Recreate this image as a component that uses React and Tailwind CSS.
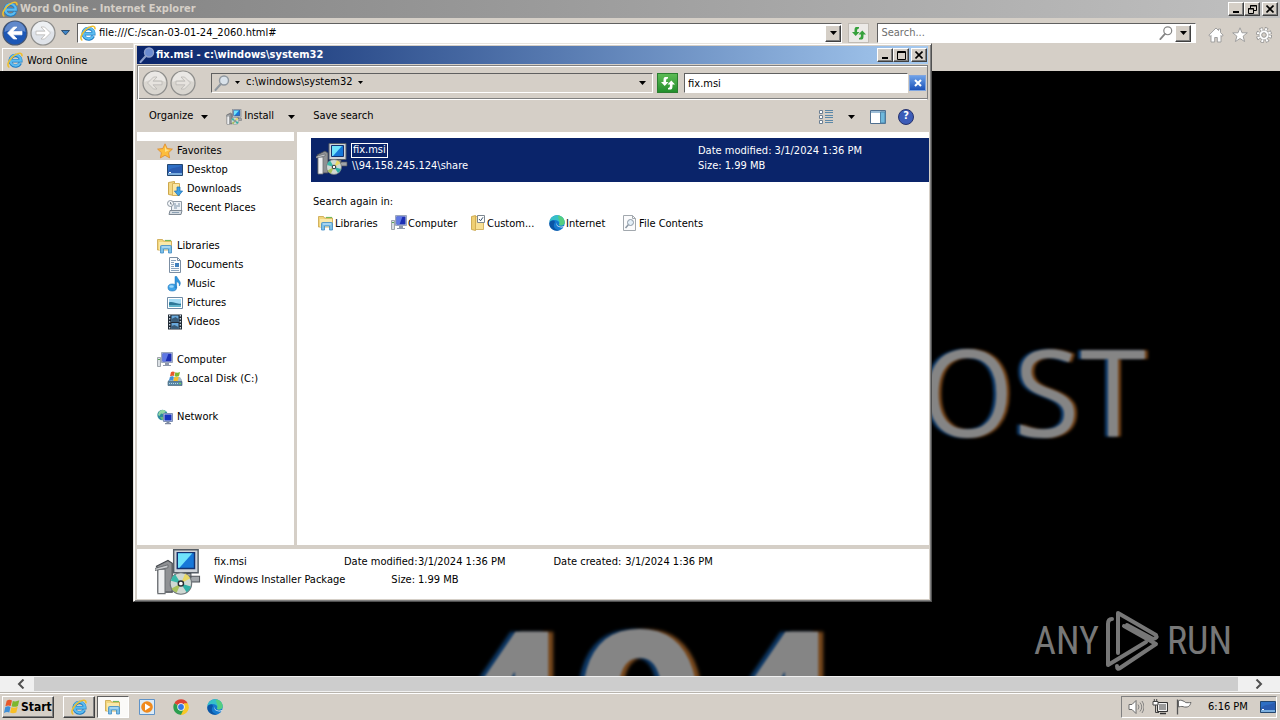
import { useState } from 'react'

const RAISED = 'bg-[#d5cfc7] border border-t-white border-l-white border-r-[#404040] border-b-[#404040] shadow-[inset_-1px_-1px_0_#808080]'
const SUNKEN = 'border border-t-[#606060] border-l-[#606060] border-r-white border-b-white'

const FAVORITES = [
  { label: 'Desktop', Icon: DesktopIcon },
  { label: 'Downloads', Icon: DownloadsIcon },
  { label: 'Recent Places', Icon: RecentIcon },
]

const LIBRARIES = [
  { label: 'Documents', Icon: DocumentIcon },
  { label: 'Music', Icon: MusicIcon },
  { label: 'Pictures', Icon: PictureIcon },
  { label: 'Videos', Icon: VideoIcon },
]

const TREE = [
  { label: 'Favorites', Icon: StarIcon, items: FAVORITES },
  { label: 'Libraries', Icon: LibrariesIcon, items: LIBRARIES },
  { label: 'Computer', Icon: ComputerIcon, items: [{ label: 'Local Disk (C:)', Icon: DiskIcon }] },
  { label: 'Network', Icon: NetworkIcon, items: [] },
]

const SEARCH_AGAIN = [
  { label: 'Libraries', Icon: LibrariesIcon, width: 'w-[73px]' },
  { label: 'Computer', Icon: ComputerIcon, width: 'w-[79px]' },
  { label: 'Custom...', Icon: CustomIcon, width: 'w-[79px]' },
  { label: 'Internet', Icon: EdgeIcon, width: 'w-[73px]' },
  { label: 'File Contents', Icon: FileSearchIcon, width: 'w-[100px]' },
]

function Svg({ size = 16, box = 16, children }) {
  return (
    <svg width={size} height={size} viewBox={`0 0 ${box} ${box}`} fill="none" className="shrink-0" aria-hidden="true">
      {children}
    </svg>
  )
}

function Caret() {
  return (
    <svg width="7" height="4" viewBox="0 0 7 4" className="shrink-0" aria-hidden="true">
      <path d="M0 0h7L3.500 4z" fill="#000" />
    </svg>
  )
}

function SmallCaret() {
  return (
    <svg width="5" height="3" viewBox="0 0 5 3" className="shrink-0" aria-hidden="true">
      <path d="M0 0h5L2.500 3z" fill="#000" />
    </svg>
  )
}

function IeIcon() {
  return (
    <Svg>
      <path d="M13.300 11A5.300 5.300 0 1 1 13.800 8.700H4.500" stroke="#1f7cc4" strokeWidth="3.400" />
      <path d="M13.100 11A5.300 5.300 0 1 1 13.800 8.700H4.500" stroke="#5cbcf0" strokeWidth="2.200" />
      <path d="M1.800 15C-.8 12.500 3 6 8.500 2.600 12 .5 15.300.6 15 3.800" stroke="#eebf2f" strokeWidth="1.600" strokeLinecap="round" />
    </Svg>
  )
}

function StarIcon() {
  return (
    <Svg>
      <path d="M8 .8l2.200 4.700 5.200.6-3.800 3.600 1 5.200L8 12.300l-4.600 2.600 1-5.200L.6 6.100l5.200-.6z" fill="#fcbd3c" stroke="#e0892a" strokeWidth=".8" />
      <path d="M8 3l1.500 3.500 3 .4L8 9z" fill="#fee08a" />
    </Svg>
  )
}

function DesktopIcon() {
  return (
    <Svg>
      <path d="M.5 2.500h15v11H.5z" fill="#2f6fc4" stroke="#23466f" />
      <path d="M1 9c5-5 9-2 14-6v8H1z" fill="#2a5cb0" />
      <path d="M1 11h14v2H1z" fill="#7baede" />
      <path d="M2 10h2v1H2z" fill="#fff" />
    </Svg>
  )
}

function DownloadsIcon() {
  return (
    <Svg>
      <path d="M1.500 1.500l6-1v14l-6-1z" fill="#f3d885" stroke="#cda74b" />
      <path d="M5.500 2.500h7v12h-7z" fill="#fbe7a4" stroke="#d6b25b" />
      <path d="M10 6h3v4h2.600L11.500 15 7.400 10H10z" fill="#3fa1e4" stroke="#1b6db4" strokeWidth=".7" />
    </Svg>
  )
}

function RecentIcon() {
  return (
    <Svg>
      <path d="M4.500 1.500h10v9h-10z" fill="#eef2f6" stroke="#8f9aa5" />
      <path d="M6 4h3m2 0h2M7 6h6M7 8h3" stroke="#7d93a8" />
      <path d="M3 10.500h12l-1 4H2z" fill="#d6dce2" stroke="#7e8994" />
      <path d="M5 12.500h7" stroke="#8ba0b3" />
      <circle cx="3.500" cy="3.500" r="3" fill="#f4f7fa" stroke="#8c97a1" />
      <path d="M3.500 2v2H5" stroke="#55626e" strokeWidth=".7" />
    </Svg>
  )
}

function LibrariesIcon() {
  return (
    <Svg>
      <path d="M.5 1.500h5l1 1.500h8v9H.5z" fill="#f2d67c" stroke="#c9a348" strokeWidth=".8" />
      <path d="M2 4h12v8H2z" fill="#fae9a9" />
      <path d="M8 2.500h6" stroke="#76b85a" strokeWidth="1.200" />
      <path d="M3.500 15V8.500q0-1 1-1h9q1 0 1 1V15h-3v-4h-5v4z" fill="#7cc0e8" stroke="#3f8cc4" strokeWidth=".8" />
      <path d="M5 9h8" stroke="#cdeafa" />
    </Svg>
  )
}

function DocumentIcon() {
  return (
    <Svg>
      <path d="M2.500.5h8l3 3v12h-11z" fill="#fafcfe" stroke="#7b8ea3" />
      <path d="M10.500.5v3h3" stroke="#7b8ea3" />
      <path d="M4 3.500h5M4 5.500h3M4 7.500h3M4 9.500h3M4 11.500h8M4 13.500h8" stroke="#8aa4be" />
      <path d="M8 6h4v4H8z" fill="#3f7fbd" />
    </Svg>
  )
}

function MusicIcon() {
  return (
    <Svg>
      <ellipse cx="5.300" cy="11.500" rx="4.300" ry="3.500" fill="#3fa3e8" stroke="#1f76bd" strokeWidth=".6" />
      <path d="M8 .5v11.500h1.600V5.500c2 1 3 2 2.700 4.500 3-4-1-5.500-2.500-9.500z" fill="#2f95dd" stroke="#1f76bd" strokeWidth=".5" />
      <ellipse cx="4.500" cy="10.500" rx="2.300" ry="1.200" fill="#9bd7fa" />
    </Svg>
  )
}

function PictureIcon() {
  return (
    <Svg>
      <path d="M.5 2.500h15v11H.5z" fill="#fff" stroke="#6f8ba6" />
      <path d="M2 4h12v8H2z" fill="#a6dcf5" />
      <path d="M2 7.500c4-1.500 7 2 12 1V12H2z" fill="#2f7898" />
      <path d="M2 10h12v2H2z" fill="#62b5cc" />
    </Svg>
  )
}

function VideoIcon() {
  return (
    <Svg>
      <path d="M1 .5h14v15H1z" fill="#202a35" />
      <path d="M4.500 1.500h7V8h-7zM4.500 9h7v6h-7z" fill="#69a9dc" />
      <path d="M4.500 5l4-2 3 2v3h-7zM4.500 12l3-1 4 2v2h-7z" fill="#3a5c78" />
      <path d="M2.700 1v14M13.300 1v14" stroke="#dce7f0" strokeWidth="1.200" strokeDasharray="1.500 1.500" />
    </Svg>
  )
}

function ComputerIcon() {
  return (
    <Svg>
      <path d="M.5 5.500h3v9h-3z" fill="#dadfe4" stroke="#8a929a" strokeWidth=".8" />
      <path d="M1 7.500h2" stroke="#58a454" />
      <path d="M4.500.500h11v10h-11z" fill="#c9d2e2" stroke="#9aa6bd" />
      <path d="M5.500 1.500h9v8h-9z" fill="#1c2fb4" />
      <path d="M5.500 1.500h6l-3 8h-3z" fill="#5f78e4" />
      <path d="M8 11h4v2H8zM6 13h8v1H6z" fill="#8f99ac" />
    </Svg>
  )
}

function WinFlag() {
  return (
    <>
      <path d="M2.700 1.700c2-1.500 3.700-1 5.300-.3L6.700 7c-1.800-.8-3.300-.8-5.300.3z" fill="#e8582a" />
      <path d="M8.800 1.900c1.800.8 4 .6 6.500-.6L13.900 7c-2.300 1.100-4.500 1-6.300.3z" fill="#7db72f" />
      <path d="M1.200 8.200c2-1.100 3.700-1 5.300-.3l-1.200 5.600c-1.600-.8-3.300-.7-5.300.4z" fill="#3f8fd8" />
      <path d="M7.400 8.300c1.900.7 4 .6 6.300-.5l-1.400 5.600c-2.300 1.100-4.400.9-6.200.2z" fill="#f8bf27" />
    </>
  )
}

function DiskIcon() {
  return (
    <Svg>
      <path d="M2 9l2-3h9l2 3v5H1V9z" fill="#a7bccb" />
      <g transform="translate(2 0) scale(.72)"><WinFlag /></g>
      <path d="M1 10.500h14v4H1z" fill="#5a87a5" stroke="#48677c" strokeWidth=".7" />
      <path d="M2 12.500h9" stroke="#b9d7e8" strokeDasharray="1 1" />
      <path d="M12 12h2v1h-2z" fill="#6ee04b" />
    </Svg>
  )
}

function NetworkIcon() {
  return (
    <Svg>
      <circle cx="5.500" cy="6" r="5.200" fill="#2d8a9e" />
      <path d="M2 3c2-3 6-2 7-.5L6 5 4 4.500 2.500 7 1 6z" fill="#8fd6a2" />
      <path d="M3 8l3 0 1 3-2 0z" fill="#66b87f" />
      <path d="M6.500 4.500h9v8h-9z" fill="#c6d2e8" stroke="#7f90b5" />
      <path d="M7.500 5.500h7v6h-7z" fill="#1632c0" />
      <path d="M9.500 13h3v1h1.500v1.200H8V14h1.500z" fill="#7f8aa0" />
    </Svg>
  )
}

function CustomIcon() {
  return (
    <Svg>
      <path d="M1.500 1.500l4-1v15l-4-1z" fill="#efcf73" stroke="#c59f3f" strokeWidth=".8" />
      <path d="M5.500 1.500h8v13h-8z" fill="#f8e096" stroke="#cda74b" strokeWidth=".8" />
      <path d="M7.500.5h7v7h-7z" fill="#fff" stroke="#7c8790" />
      <path d="M9 4l1.500 1.800L13 2.300" stroke="#39536b" />
    </Svg>
  )
}

function FileSearchIcon() {
  return (
    <Svg>
      <path d="M1.500.5h9l3 3v12h-12z" fill="#fbfbfc" stroke="#a2a8ae" />
      <path d="M10.500.5v3h3" stroke="#a2a8ae" />
      <circle cx="8.500" cy="7.500" r="3" fill="#e4eff8" stroke="#8c98a4" />
      <path d="M6.300 9.800L3.500 13" stroke="#8c98a4" strokeWidth="1.500" />
    </Svg>
  )
}

function EdgeIcon() {
  return (
    <Svg>
      <circle cx="8" cy="8" r="7.700" fill="#1479cf" />
      <path d="M.4 7C1.500-2 15-2 15.700 7c.1 3-2.600 4-5.200 3.300-1.200-.5-.4-1 0-2C10.500 5 4 3.500.4 7z" fill="#36c0c8" />
      <path d="M9 .5c4 .4 6.800 3.500 6.700 7-.2 2.600-2.900 3.500-5.200 2.800-1.200-.5-.4-1 0-2C11 5 9 4 9 .5z" fill="#5fd36a" opacity=".75" />
      <path d="M6 7c-3 4 0 8.500 4.500 8.300C6 17-.5 13.500.4 8 2 5 5 5 6 7z" fill="#0b55a5" />
      <path d="M8 7.500c-1 2.500 1.500 5.500 7.300 3.600l-.4 1C10 13.500 6 10.500 8 7.500z" fill="#eef3f6" />
    </Svg>
  )
}

function ChromeIcon() {
  return (
    <Svg>
      <path d="M8 8L1.300 4.200A7.700 7.700 0 0 1 14.700 4.200z" fill="#de4334" />
      <path d="M8 8h7.700A7.700 7.700 0 0 1 7 15.600z" fill="#f8c828" />
      <path d="M14.700 4.200A7.700 7.700 0 0 1 8 15.700L11 9V4.200z" fill="#f8c828" />
      <path d="M1.300 4.200A7.700 7.700 0 0 0 8 15.700L11 9.600 8 8z" fill="#2c9e4f" />
      <circle cx="8" cy="8" r="3.700" fill="#fff" />
      <circle cx="8" cy="8" r="2.900" fill="#3578e5" />
    </Svg>
  )
}

function WmpIcon() {
  return (
    <Svg>
      <path d="M.5.5h15v15H.5z" fill="#dcebf7" stroke="#5f93c8" />
      <circle cx="8" cy="8" r="5.800" fill="#f08a1d" />
      <path d="M6 4.500L11.500 8 6 11.500z" fill="#fff" />
    </Svg>
  )
}

// computer tower, monitor and disc
function MsiIcon({ size }) {
  return (
    <Svg size={size} box={32}>
      <path d="M13 .500h17v16H13z" fill="#cfd3d8" stroke="#555d66" />
      <path d="M15.500 2.500h12v11h-12z" fill="#1677d9" stroke="#13316f" />
      <path d="M16 3h10l-9 10h-1z" fill="#6fe3fb" />
      <path d="M18 17h7v3h-7zM14 19h17v4H14z" fill="#a1a5aa" stroke="#4d5258" strokeWidth=".7" />
      <path d="M1 12l8-4 3 2v20H2V14z" fill="#8f9194" stroke="#45494e" strokeWidth=".8" />
      <path d="M2 14h5v17H2z" fill="#eeeff0" stroke="#6d7175" strokeWidth=".8" />
      <path d="M0 13.500l9-2.500v2l-9 2z" fill="#c9cbce" stroke="#55595e" strokeWidth=".5" />
      <circle cx="18" cy="24" r="7.500" fill="#cfd8d3" stroke="#70767b" strokeWidth=".8" />
      <path d="M18 24L11 22a7 7 0 0 1 3-4.500z" fill="#39b8a9" />
      <path d="M18 24l3-6.700a7 7 0 0 1 3.500 3z" fill="#e8d964" />
      <path d="M18 24l7 2a7 7 0 0 1-3 4z" fill="#2fb0a6" />
      <path d="M18 24l-3 6.500a7 7 0 0 1-3.500-3z" fill="#a9c25c" />
      <circle cx="18" cy="24" r="1.800" fill="#fff" stroke="#2b3035" />
    </Svg>
  )
}

function Magnifier({ size = 16, lens, rim }) {
  return (
    <Svg size={size}>
      <circle cx="10" cy="5.500" r="4.500" fill={lens} stroke={rim} strokeWidth="1.400" />
      <path d="M6.800 9L1.500 15" stroke={rim} strokeWidth="2" strokeLinecap="round" />
    </Svg>
  )
}

function RefreshIcon({ color }) {
  return (
    <Svg>
      <path d="M5 2h3v1.500C6.500 3.500 6 4.500 6 7h2.500L4.700 11 1 7h2.500C3.500 4 3.500 2.500 5 2z" fill={color} />
      <path d="M11 14.500H8V13c1.500 0 2-1 2-3.500H7.500L11.300 5.500 15 9.500h-2.500c0 3 0 4.500-1.500 5z" fill={color} />
    </Svg>
  )
}

function NavCircle({ label, forward, active }) {
  const fill = active ? '#1d57b5' : forward === 'light' ? '#dfe3e9' : '#d9d6d0'
  return (
    <button type="button" aria-label={label} className="shrink-0">
      <Svg size={26} box={26}>
        <circle cx="13" cy="13" r="12" fill={fill} stroke={active ? '#48566e' : '#8d8d8b'} strokeWidth="1.200" />
        <path d="M2.500 12a10.500 10.500 0 0 1 21 0c-6-3-15-3-21 0z" fill="#fff" opacity={active ? '.3' : '.45'} />
        <g transform={forward ? 'translate(26 0) scale(-1 1)' : undefined}>
          <path
            d="M5.500 13l6-6h3.500l-4 4.200h9v3.600h-9l4 4.200h-3.500z"
            fill={active || forward === 'light' ? '#fff' : '#e6e3de'}
            stroke={active ? '#fff' : '#b5b3b0'}
            strokeWidth=".7"
          />
        </g>
      </Svg>
    </button>
  )
}

function CaptionButtons({ restore }) {
  return (
    <div className="flex shrink-0">
      <button type="button" aria-label="Minimize" className={`flex h-[14px] w-4 items-end justify-center pb-[2px] ${RAISED}`}>
        <span className="h-[2px] w-[6px] bg-black" />
      </button>
      <button type="button" aria-label={restore ? 'Restore' : 'Maximize'} className={`flex h-[14px] w-4 items-center justify-center ${RAISED}`}>
        {restore ? (
          <svg width="9" height="9" viewBox="0 0 9 9" fill="none" stroke="#000" aria-hidden="true">
            <path d="M2.500 3V.5h6v5H6M2 1h7M.5 3.500h5v5h-5zM0 4h6" />
          </svg>
        ) : (
          <svg width="9" height="9" viewBox="0 0 9 9" fill="none" stroke="#000" aria-hidden="true">
            <path d="M.5.5h8v8h-8zM0 1.500h9" />
          </svg>
        )}
      </button>
      <button type="button" aria-label="Close" className={`ml-[2px] flex h-[14px] w-4 items-center justify-center ${RAISED}`}>
        <svg width="8" height="8" viewBox="0 0 8 8" stroke="#000" strokeWidth="1.600" aria-hidden="true">
          <path d="M.5.5l7 7M7.500.5l-7 7" />
        </svg>
      </button>
    </div>
  )
}

function BrowserChrome() {
  return (
    <header className="bg-[#d5cfc7]">
      <div className="flex h-[18px] items-center bg-linear-to-r from-[#808080] to-[#c0c0c0] pr-[2px] pl-[2px]">
        <IeIcon />
        <h1 className="ml-[2px] flex-1 text-[11px] font-bold text-[#d5cfc7]">Word Online - Internet Explorer</h1>
        <CaptionButtons restore />
      </div>
      <div className="flex h-[30px] items-center pl-[2px] pr-2">
        <NavCircle label="Back" active />
        <span className="w-[2px]" />
        <NavCircle label="Forward" forward="light" />
        <button type="button" aria-label="Recent pages" className="ml-[5px] w-[9px]">
          <svg width="9" height="6" viewBox="0 0 9 6" aria-hidden="true">
            <path d="M.5.500h8L4.500 5z" fill="#3f86c8" stroke="#17385c" strokeWidth=".8" />
          </svg>
        </button>
        <div className={`ml-[7px] flex h-5 min-w-0 flex-[760] items-center bg-white pl-[2px] ${SUNKEN}`}>
          <IeIcon />
          <input aria-label="Address" defaultValue="file:///C:/scan-03-01-24_2060.html#" className="ml-[3px] min-w-0 flex-1 pt-px outline-none" />
          <button type="button" aria-label="Show address list" className={`flex h-[17px] w-4 items-center justify-center ${RAISED}`}><Caret /></button>
        </div>
        <button type="button" aria-label="Refresh" className="ml-[6px] flex h-5 w-[21px] items-center justify-center border border-[#c0bbb4] bg-[#eceae7]">
          <RefreshIcon color="#36a13c" />
        </button>
        <div className={`ml-2 flex h-5 min-w-0 flex-[309] items-center bg-white pl-[3px] pr-1 ${SUNKEN}`}>
          <input aria-label="Search" placeholder="Search..." className="min-w-0 flex-1 pt-px outline-none placeholder:text-[#6e6e6e]" />
          <Magnifier size={14} lens="#fff" rim="#858585" />
          <button type="button" aria-label="Search options" className={`ml-[2px] flex h-[17px] w-4 items-center justify-center ${RAISED}`}><Caret /></button>
        </div>
        <div className="ml-3 flex shrink-0 gap-2 pt-1">
          <button type="button" aria-label="Home">
            <Svg>
              <path d="M8 1L.8 8.300l1.500 1L3 8.500V15h3.700v-4.500h2.600V15H13V8.500l.7.800 1.500-1L12.500 5.500V2h-2v1.500z" fill="#fff" stroke="#979797" strokeWidth=".9" />
            </Svg>
          </button>
          <button type="button" aria-label="Favorites">
            <Svg>
              <path d="M8 .8l2 5h5.300l-4.200 3.400 1.500 5.300L8 11.500l-4.600 3 1.500-5.300L.7 5.800H6z" fill="#fff" stroke="#979797" strokeWidth=".9" />
            </Svg>
          </button>
          <button type="button" aria-label="Tools">
            <Svg>
              <circle cx="8" cy="8" r="6.300" stroke="#8f8f8f" strokeWidth="3.400" strokeDasharray="3 1.948" />
              <circle cx="8" cy="8" r="5" fill="#fff" stroke="#8f8f8f" strokeWidth=".8" />
              <circle cx="8" cy="8" r="6" stroke="#fff" strokeWidth="2.400" strokeDasharray="1.900 2.812" strokeDashoffset="-.5" />
              <circle cx="8" cy="8" r="2.300" fill="#d5cfc7" stroke="#8f8f8f" strokeWidth=".9" />
            </Svg>
          </button>
        </div>
      </div>
      <div className="flex h-[23px] items-center">
        <button type="button" className="ml-[2px] flex h-[23px] w-[200px] items-center border-t border-l border-white pl-1">
          <IeIcon />
          <span className="ml-1 pt-[2px]">Word Online</span>
        </button>
      </div>
    </header>
  )
}

function FolderTree() {
  const [selected, setSelected] = useState('Favorites')
  return (
    <nav aria-label="Folders" className="w-[157px] shrink-0 bg-white pt-[9px]">
      {TREE.map(({ label, Icon, items }) => (
        <section key={label} className="mb-[19px]">
          <button
            type="button"
            onClick={() => setSelected(label)}
            className={`flex h-[19px] w-full items-center gap-1 pl-5 ${selected === label ? 'bg-[#d5cfc7]' : ''}`}
          >
            <Icon />
            <span className="pt-[2px]">{label}</span>
          </button>
          {items.map((item) => (
            <button
              key={item.label}
              type="button"
              onClick={() => setSelected(item.label)}
              className={`flex h-[19px] w-full items-center gap-1 pl-[30px] ${selected === item.label ? 'bg-[#d5cfc7]' : ''}`}
            >
              <item.Icon />
              <span className="pt-[2px]">{item.label}</span>
            </button>
          ))}
        </section>
      ))}
    </nav>
  )
}

function ExplorerToolbar() {
  return (
    <div className="flex h-8 shrink-0 items-center pt-px pl-[13px] pr-[15px]">
      <button type="button" className="flex items-center gap-2">Organize <Caret /></button>
      <button type="button" className="ml-[18px] flex items-center gap-[2px]"><MsiIcon size={16} />Install</button>
      <button type="button" aria-label="Install options" className="ml-[14px]"><Caret /></button>
      <button type="button" className="ml-[18px]">Save search</button>
      <div className="ml-auto flex items-center">
        <button type="button" aria-label="Change view">
          <Svg>
            <path d="M1.500 1.500h3v3h-3zM1.500 6.500h3v3h-3zM1.500 11.500h3v3h-3z" fill="#fff" stroke="#6b7f93" />
            <path d="M7 1.500h8M7 3.500h8M7 6.500h8M7 8.500h8M7 11.500h8M7 13.500h8" stroke="#5c88a8" />
          </Svg>
        </button>
        <button type="button" aria-label="More view options" className="ml-[14px]"><Caret /></button>
        <button type="button" aria-label="Preview pane" className="ml-[15px]">
          <Svg>
            <path d="M.5 1.500h15v13H.5z" fill="#fff" stroke="#4f6f8f" />
            <path d="M1 2h14v2H1z" fill="#9dbdd6" />
            <path d="M10.500 3v11H15V3z" fill="#6fb8dc" stroke="#4f84a8" />
          </Svg>
        </button>
        <button type="button" aria-label="Help" className="ml-3">
          <span className="flex h-4 w-4 items-center justify-center rounded-full border border-[#27336e] bg-[#3c5cb8] text-[11px] font-bold text-white">?</span>
        </button>
      </div>
    </div>
  )
}

function ExplorerWindow() {
  return (
    <main className="absolute top-[43px] left-[133px] flex h-[559px] w-[799px] flex-col border border-t-[#e8e4de] border-l-[#e8e4de] border-r-[#505050] border-b-[#505050] bg-[#d5cfc7] px-[2px] pt-[2px] pb-[2px] shadow-[inset_1px_1px_0_#fff,inset_-1px_-1px_0_#808080]">
      <div className="mx-px flex h-[18px] shrink-0 items-center bg-linear-to-r from-[#0a246a] to-[#a6caf0] pr-px pl-[2px]">
        <Magnifier lens="#6b8bd0" rim="#8d9fcb" />
        <h2 className="ml-px flex-1 text-[11px] font-bold text-white">fix.msi - c:\windows\system32</h2>
        <CaptionButtons />
      </div>

      <div className="mx-px mt-px flex h-[35px] shrink-0 items-center border border-t-[#808080] border-l-[#808080] border-r-[#808080] border-b-white pr-px pl-1 shadow-[inset_1px_1px_0_#fff,inset_0_-1px_0_#808080]">
        <NavCircle label="Back" />
        <span className="w-[2px]" />
        <NavCircle label="Forward" forward="gray" />
        <div className={`ml-[15px] flex h-5 flex-[442] items-center pl-[2px] pr-[6px] ${SUNKEN}`}>
          <Magnifier lens="#d9e2ea" rim="#8f979f" />
          <button type="button" aria-label="Path menu" className="mx-[5px] w-[6px]"><SmallCaret /></button>
          <button type="button" className="flex items-center gap-[5px]">c:\windows\system32 <SmallCaret /></button>
          <button type="button" aria-label="Previous locations" className="ml-auto"><Caret /></button>
        </div>
        <button type="button" aria-label="Refresh" className="ml-1 flex h-5 w-[21px] items-center justify-center border border-[#2b7d30] bg-linear-to-b from-[#5cbb55] to-[#218f2c]">
          <RefreshIcon color="#fff" />
        </button>
        <input aria-label="Search" defaultValue="fix.msi" className={`ml-[6px] h-5 min-w-0 flex-[224] bg-white pt-px pl-[3px] outline-none ${SUNKEN}`} />
        <button type="button" aria-label="Clear search" className="ml-px flex h-4 w-[17px] items-center justify-center border border-[#7fa5e0] bg-linear-to-b from-[#6da0e8] to-[#1d52b8]">
          <svg width="8" height="8" viewBox="0 0 8 8" stroke="#fff" strokeWidth="2" aria-hidden="true">
            <path d="M1 1l6 6M7 1L1 7" />
          </svg>
        </button>
      </div>

      <ExplorerToolbar />

      <div className="flex min-h-0 flex-1 pl-px">
        <FolderTree />
        <div className="w-[3px] shrink-0 bg-[#d5cfc7]" />
        <div className="flex-1 bg-white pt-[6px] pl-[14px]">
          <button type="button" className="flex h-11 w-full items-start bg-[#0a246a] pt-[5px] pl-[5px] text-left text-white">
            <MsiIcon size={32} />
            <span className="ml-[3px] w-[347px]">
              <span className="flex h-[15px] w-fit items-center border border-white px-px">fix.msi</span>
              <span className="block pl-px leading-[15px]">\\94.158.245.124\share</span>
            </span>
            <span className="leading-[15px]">
              <span className="block">Date modified: 3/1/2024 1:36 PM</span>
              <span className="block">Size: 1.99 MB</span>
            </span>
          </button>
          <p className="mt-3 pl-[2px] leading-[15px]">Search again in:</p>
          <div className="mt-[6px] flex pl-[7px]">
            {SEARCH_AGAIN.map(({ label, Icon, width }) => (
              <button key={label} type="button" className={`flex h-4 items-center gap-px whitespace-nowrap ${width} shrink-0`}>
                <Icon />
                <span className="pt-[2px]">{label}</span>
              </button>
            ))}
          </div>
        </div>
      </div>

      <footer className="ml-px mt-1 flex h-[50px] shrink-0 items-start bg-white pl-[18px]">
        <MsiIcon size={46} />
        <div className="ml-[13px] w-[130px] shrink-0 pt-1 leading-[18px]">
          <p>fix.msi</p>
          <p className="whitespace-nowrap">Windows Installer Package</p>
        </div>
        <dl className="grid grid-cols-[71px_auto] gap-x-[3px] pt-1 leading-[18px] whitespace-nowrap">
          <dt className="text-right">Date modified:</dt>
          <dd>3/1/2024 1:36 PM</dd>
          <dt className="text-right">Size:</dt>
          <dd>1.99 MB</dd>
        </dl>
        <dl className="ml-12 flex gap-1 pt-1 leading-[18px] whitespace-nowrap">
          <dt>Date created:</dt>
          <dd>3/1/2024 1:36 PM</dd>
        </dl>
      </footer>
    </main>
  )
}

function Watermark() {
  return (
    <div className="absolute right-12 bottom-1 flex items-center gap-[6px] font-['Roboto_Condensed',sans-serif] text-[38px] leading-none text-[#777]">
      <span>ANY</span>
      <svg width="56" height="62" viewBox="0 0 56 62" fill="none" stroke="#777" strokeWidth="4" strokeLinecap="round" strokeLinejoin="round" aria-hidden="true">
        <path d="M7 9q-4 0-4 5v41L41 32" />
        <path d="M19 16l32 18L15 58q-3 2-3-2" />
        <path d="M13 43V3l38 22q2 3-3 4L22 15" />
      </svg>
      <span>RUN</span>
    </div>
  )
}

function Taskbar() {
  return (
    <footer className="flex h-[28px] shrink-0 items-center border-t border-[#b8b4ad] bg-[#d5cfc7] pr-[3px] pl-[2px] shadow-[inset_0_1px_0_#fff]">
      <button type="button" className={`flex h-[22px] w-[52px] items-center gap-px pl-px text-[12px] font-bold ${RAISED}`}>
        <Svg><WinFlag /></Svg>
        Start
      </button>
      <button type="button" aria-label="Internet Explorer" className={`ml-[9px] flex h-[22px] w-8 items-center justify-center ${RAISED}`}><IeIcon /></button>
      <button type="button" aria-label="Windows Explorer" className={`ml-[2px] flex h-[22px] w-8 items-center justify-center bg-[#fbfaf8] ${SUNKEN}`}><LibrariesIcon /></button>
      <div className="ml-[10px] flex gap-[18px]">
        <button type="button" aria-label="Media Player"><WmpIcon /></button>
        <button type="button" aria-label="Chrome"><ChromeIcon /></button>
        <button type="button" aria-label="Edge"><EdgeIcon /></button>
      </div>
      <div className="ml-auto flex h-[22px] items-center border border-t-[#808080] border-l-[#808080] border-r-white border-b-white pl-[6px]">
        <button type="button" aria-label="Volume">
          <Svg>
            <path d="M1 5.500h3l4-4v13l-4-4H1z" fill="#fff" stroke="#6b6b6b" />
            <path d="M10 5.500q2 2.500 0 5M12 3.500q3.500 4.500 0 9M14 2q4 6 0 12" stroke="#7b7b7b" strokeWidth=".9" />
          </Svg>
        </button>
        <button type="button" aria-label="Network" className="ml-2">
          <Svg>
            <path d="M5.500 3.500h10v9h-10z" fill="#9a9a9a" stroke="#333" />
            <path d="M6.500 4.500h8v7h-8z" stroke="#f2f2f2" />
            <path d="M8 14.500h6" stroke="#333" strokeWidth="1.500" />
            <path d="M1 2.500h5v3.500h-5zM2.300 0v2.500M4.700 0v2.500" fill="#fff" stroke="#444" />
            <path d="M3.500 6v7.500H7" stroke="#444" />
          </Svg>
        </button>
        <button type="button" aria-label="Action Center" className="ml-2">
          <Svg>
            <path d="M1.500.5v15" stroke="#555" strokeWidth="1.300" />
            <path d="M2.500 1.500c3-1 4 .5 6 1 0 1 2 1.500 6.500 1-1 3-2 5-6.500 4.500-2-.5-3-1-6 0z" fill="#fff" stroke="#666" />
          </Svg>
        </button>
        <time className="ml-4 w-[40px] pt-[2px] whitespace-nowrap">6:16 PM</time>
        <button type="button" aria-label="Show desktop" className="ml-3"><DesktopIcon /></button>
      </div>
    </footer>
  )
}

function Chevron({ flip }) {
  return (
    <svg width="8" height="10" viewBox="0 0 8 10" fill="none" stroke="#505050" strokeWidth="2" aria-hidden="true">
      <path d={flip ? 'M1.500 .5L6 5 1.500 9.500' : 'M6.500 .5L2 5l4.500 4.500'} />
    </svg>
  )
}

export default function App() {
  return (
    <div className="relative flex h-screen flex-col overflow-hidden bg-black font-['DejaVu_Sans_Condensed','Noto_Sans',sans-serif] text-[11px] text-black">
      <BrowserChrome />
      <div className="relative min-h-0 flex-1 overflow-hidden bg-black font-['Open_Sans',sans-serif] text-[#858585]">
        <p className="mt-[236px] pr-[134px] text-right text-[120px] leading-[168px] font-normal blur-[1px] [text-shadow:-3px_0_2px_#123f70,3px_0_2px_#75451a]">OST</p>
        <p className="mt-[114px] text-center text-[236px] leading-[240px] font-bold blur-[1px] [text-shadow:-5px_0_3px_#0f3a68,5px_0_3px_#7a4a1e]">404</p>
        <Watermark />
      </div>
      <div className="flex h-4 shrink-0 bg-[#f0f0f0]">
        <button type="button" aria-label="Scroll left" className="flex w-[34px] items-center justify-center pl-2"><Chevron /></button>
        <div className="flex-1 border-y border-[#f0f0f0] bg-[#cdcdcd]" />
        <button type="button" aria-label="Scroll right" className="flex w-[42px] items-center justify-center"><Chevron flip /></button>
      </div>
      <Taskbar />
      <ExplorerWindow />
    </div>
  )
}
